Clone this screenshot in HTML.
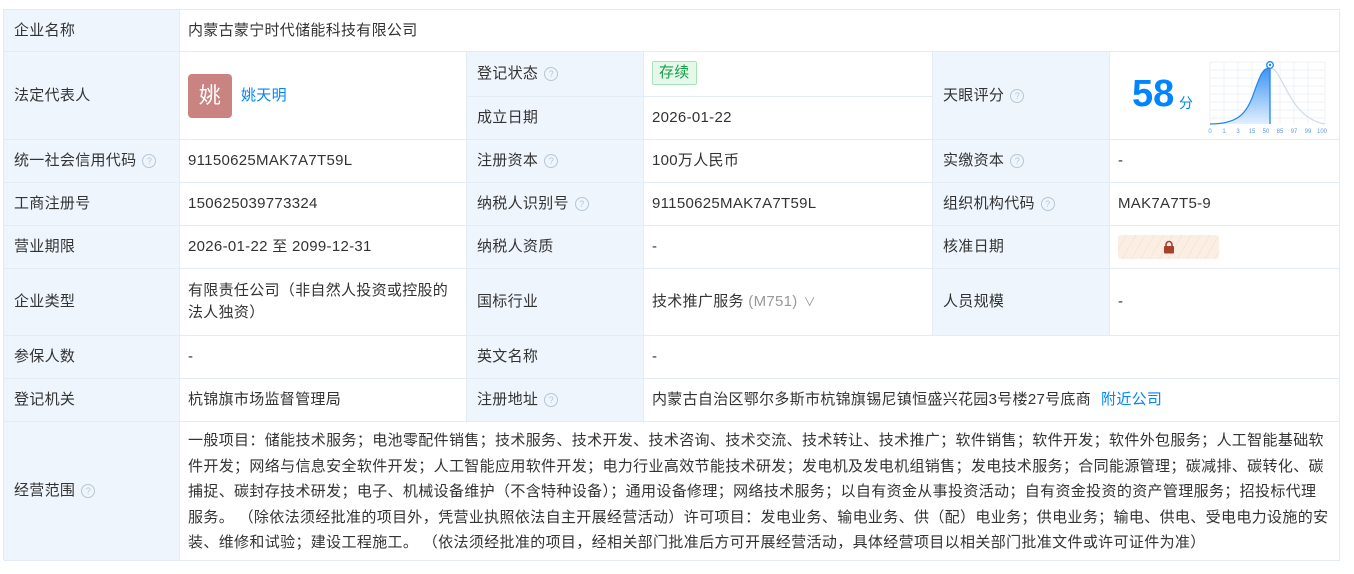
<!DOCTYPE html>
<html><head><meta charset="utf-8"><style>
body{margin:0;background:#fff;width:1354px;height:574px;overflow:hidden;font-family:"Liberation Sans","Noto Sans CJK SC",sans-serif;font-size:15px;letter-spacing:0.3px;color:#333}
.c{position:absolute;box-sizing:border-box;border-right:1px solid #e4ecf3;border-bottom:1px solid #e4ecf3;display:flex;align-items:center;padding:0 8px;line-height:22px}
.l{background:#eef5fc;padding-left:10px}
.q{display:inline-block;width:12px;height:12px;border:1px solid #b5c7d8;border-radius:50%;color:#b5c7d8;font-size:9px;line-height:12px;text-align:center;margin-left:6px;vertical-align:middle;letter-spacing:0}
a{color:#0084ff;text-decoration:none}
</style></head><body>
<div style="position:absolute;left:3px;top:9px;width:1337px;height:551px;border-left:1px solid #e4ecf3;border-top:1px solid #e4ecf3;box-sizing:border-box"></div>
<div class="c l" style="left:4px;top:10px;width:176px;height:42px">企业名称</div>
<div class="c" style="left:180px;top:10px;width:1160px;height:42px">内蒙古蒙宁时代储能科技有限公司</div>
<div class="c l" style="left:4px;top:52px;width:176px;height:88px">法定代表人</div>
<div class="c" style="left:180px;top:52px;width:287px;height:88px"><span style="width:44px;height:44px;background:#c98380;border-radius:4px;color:#fff;font-size:22px;display:inline-flex;align-items:center;justify-content:center;margin-right:9px">姚</span><a>姚天明</a></div>
<div class="c l" style="left:467px;top:52px;width:177px;height:45px">登记状态<span class="q">?</span></div>
<div class="c" style="left:644px;top:52px;width:289px;height:45px;align-items:flex-start;padding-top:9px"><span style="background:#e5f9ea;border:1px solid #a8e3b8;color:#1a9e47;border-radius:2px;padding:0 6px;font-size:15px;line-height:22px">存续</span></div>
<div class="c l" style="left:467px;top:97px;width:177px;height:43px">成立日期</div>
<div class="c" style="left:644px;top:97px;width:289px;height:43px">2026-01-22</div>
<div class="c l" style="left:933px;top:52px;width:177px;height:88px">天眼评分<span class="q">?</span></div>
<div class="c" style="left:1110px;top:52px;width:230px;height:88px;padding:0">
<span style="position:absolute;left:22px;top:20px;font-size:38px;font-weight:bold;color:#0084ff;line-height:44px;letter-spacing:0">58</span>
<span style="position:absolute;left:69px;top:40px;font-size:14px;color:#0084ff">分</span>
<svg style="position:absolute;left:98px;top:6px" width="120" height="80" viewBox="0 0 120 80">
<g stroke="#eef2f6" stroke-width="1">
<path d="M2 4H117M2 12H117M2 20H117M2 28H117M2 36H117M2 44H117M2 52H117M2 60H117"/>
<path d="M2 4V66M16 4V66M30 4V66M44 4V66M58 4V66M72 4V66M86 4V66M100 4V66M117 4V66"/>
</g>
<defs><linearGradient id="g" x1="0" y1="0" x2="0" y2="1"><stop offset="0" stop-color="#3a94f5"/><stop offset="1" stop-color="#e3efff"/></linearGradient></defs>
<path d="M62 10C75 10 80 60 117 66" fill="none" stroke="#cfdbe8" stroke-width="1.2"/>
<path d="M2 66C30 66 38 55 44 40C52 18 54 10 62 10V66Z" fill="url(#g)"/>
<path d="M2 66C30 66 38 55 44 40C52 18 54 10 62 10" fill="none" stroke="#1f86f0" stroke-width="1.2"/>
<path d="M62 8V66" stroke="#1f86f0" stroke-width="1.3"/>
<circle cx="62" cy="7" r="3.3" fill="#fff" stroke="#1f86f0" stroke-width="1.3"/><circle cx="62" cy="7" r="1.2" fill="#1f86f0"/>
<g font-size="6" fill="#5a9ce8" font-family="Liberation Sans" text-anchor="middle" letter-spacing="0"><text x="2" y="75">0</text><text x="16" y="75">1</text><text x="30" y="75">3</text><text x="44" y="75">15</text><text x="58" y="75">50</text><text x="72" y="75">85</text><text x="86" y="75">97</text><text x="100" y="75">99</text><text x="114" y="75">100</text></g>
</svg></div>
<div class="c l" style="left:4px;top:140px;width:176px;height:43px">统一社会信用代码<span class="q">?</span></div>
<div class="c" style="left:180px;top:140px;width:287px;height:43px">91150625MAK7A7T59L</div>
<div class="c l" style="left:467px;top:140px;width:177px;height:43px">注册资本<span class="q">?</span></div>
<div class="c" style="left:644px;top:140px;width:289px;height:43px">100万人民币</div>
<div class="c l" style="left:933px;top:140px;width:177px;height:43px">实缴资本<span class="q">?</span></div>
<div class="c" style="left:1110px;top:140px;width:230px;height:43px">-</div>
<div class="c l" style="left:4px;top:183px;width:176px;height:43px">工商注册号</div>
<div class="c" style="left:180px;top:183px;width:287px;height:43px">150625039773324</div>
<div class="c l" style="left:467px;top:183px;width:177px;height:43px">纳税人识别号<span class="q">?</span></div>
<div class="c" style="left:644px;top:183px;width:289px;height:43px">91150625MAK7A7T59L</div>
<div class="c l" style="left:933px;top:183px;width:177px;height:43px">组织机构代码<span class="q">?</span></div>
<div class="c" style="left:1110px;top:183px;width:230px;height:43px">MAK7A7T5-9</div>
<div class="c l" style="left:4px;top:226px;width:176px;height:43px">营业期限</div>
<div class="c" style="left:180px;top:226px;width:287px;height:43px">2026-01-22 至 2099-12-31</div>
<div class="c l" style="left:467px;top:226px;width:177px;height:43px">纳税人资质</div>
<div class="c" style="left:644px;top:226px;width:289px;height:43px">-</div>
<div class="c l" style="left:933px;top:226px;width:177px;height:43px">核准日期</div>
<div class="c" style="left:1110px;top:226px;width:230px;height:43px"><span style="width:101px;height:24px;border-radius:3px;background:repeating-linear-gradient(120deg,#fbefe4 0 7px,#f6e6d8 7px 8px);display:flex;align-items:center;justify-content:center"><svg width="14" height="14" viewBox="0 0 14 14"><path d="M4 6V4.5a3 3 0 0 1 6 0V6" fill="none" stroke="#a8412a" stroke-width="1.6"/><rect x="2" y="6" width="10" height="7.5" rx="1" fill="#a8412a"/></svg></span></div>
<div class="c l" style="left:4px;top:269px;width:176px;height:67px">企业类型</div>
<div class="c" style="left:180px;top:269px;width:287px;height:67px">有限责任公司（非自然人投资或控股的法人独资）</div>
<div class="c l" style="left:467px;top:269px;width:177px;height:67px">国标行业</div>
<div class="c" style="left:644px;top:269px;width:289px;height:67px">技术推广服务<span style="color:#999">&nbsp;(M751)</span><span style="color:#999;margin-left:6px;font-size:12px">&#x2228;</span></div>
<div class="c l" style="left:933px;top:269px;width:177px;height:67px">人员规模</div>
<div class="c" style="left:1110px;top:269px;width:230px;height:67px">-</div>
<div class="c l" style="left:4px;top:336px;width:176px;height:43px">参保人数</div>
<div class="c" style="left:180px;top:336px;width:287px;height:43px">-</div>
<div class="c l" style="left:467px;top:336px;width:177px;height:43px">英文名称</div>
<div class="c" style="left:644px;top:336px;width:696px;height:43px">-</div>
<div class="c l" style="left:4px;top:379px;width:176px;height:43px">登记机关</div>
<div class="c" style="left:180px;top:379px;width:287px;height:43px">杭锦旗市场监督管理局</div>
<div class="c l" style="left:467px;top:379px;width:177px;height:43px">注册地址<span class="q">?</span></div>
<div class="c" style="left:644px;top:379px;width:696px;height:43px">内蒙古自治区鄂尔多斯市杭锦旗锡尼镇恒盛兴花园3号楼27号底商<a style="margin-left:10px">附近公司</a></div>
<div class="c l" style="left:4px;top:422px;width:176px;height:139px">经营范围<span class="q">?</span></div>
<div class="c" style="left:180px;top:422px;width:1160px;height:139px;line-height:25.5px;letter-spacing:0.35px;padding-top:2px">一般项目：储能技术服务；电池零配件销售；技术服务、技术开发、技术咨询、技术交流、技术转让、技术推广；软件销售；软件开发；软件外包服务；人工智能基础软件开发；网络与信息安全软件开发；人工智能应用软件开发；电力行业高效节能技术研发；发电机及发电机组销售；发电技术服务；合同能源管理；碳减排、碳转化、碳捕捉、碳封存技术研发；电子、机械设备维护（不含特种设备）；通用设备修理；网络技术服务；以自有资金从事投资活动；自有资金投资的资产管理服务；招投标代理服务。 （除依法须经批准的项目外，凭营业执照依法自主开展经营活动）许可项目：发电业务、输电业务、供（配）电业务；供电业务；输电、供电、受电电力设施的安装、维修和试验；建设工程施工。 （依法须经批准的项目，经相关部门批准后方可开展经营活动，具体经营项目以相关部门批准文件或许可证件为准）</div>
</body></html>
